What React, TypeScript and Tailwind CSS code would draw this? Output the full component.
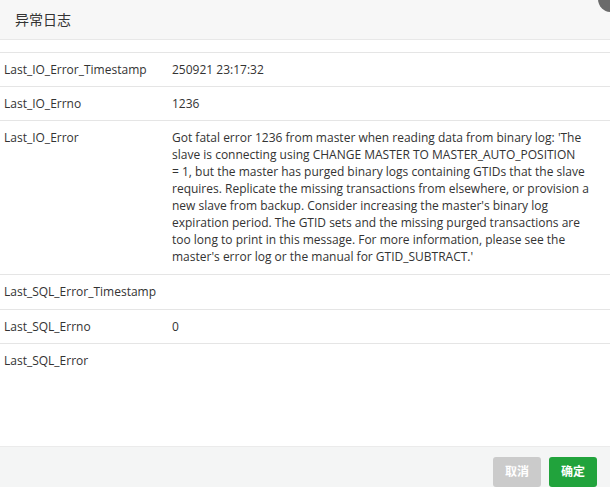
import React from "react";

const rows: { k: string; v: string[]; pb?: string }[] = [
  { k: "Last_IO_Error_Timestamp", v: ["250921 23:17:32"] },
  { k: "Last_IO_Errno", v: ["1236"] },
  {
    k: "Last_IO_Error",
    v: [
      "Got fatal error 1236 from master when reading data from binary log: 'The",
      "slave is connecting using CHANGE MASTER TO MASTER_AUTO_POSITION",
      "= 1, but the master has purged binary logs containing GTIDs that the slave",
      "requires. Replicate the missing transactions from elsewhere, or provision a",
      "new slave from backup. Consider increasing the master's binary log",
      "expiration period. The GTID sets and the missing purged transactions are",
      "too long to print in this message. For more information, please see the",
      "master's error log or the manual for GTID_SUBTRACT.'",
    ],
    pb: "pb-[9px]",
  },
  { k: "Last_SQL_Error_Timestamp", v: [], pb: "pb-[9px]" },
  { k: "Last_SQL_Errno", v: ["0"] },
  { k: "Last_SQL_Error", v: [] },
];

export default function App() {
  return (
    <div
      className="relative w-[610px] h-[487px] overflow-hidden bg-white flex flex-col text-[#333]"
      style={{ fontFamily: '"Open Sans", "Noto Sans CJK SC", sans-serif' }}
    >
      <div className="h-[40px] shrink-0 bg-[#f7f7f7] border-b border-[#e8e8e8] flex items-center pl-[15px] text-[14px]">
        异常日志
      </div>
      <div className="absolute right-[-14px] top-[-14px] w-[26px] h-[26px] rounded-full bg-[#6b6b6b]" />
      <div className="flex-1 pt-[12px]">
        <div className="border-t border-[#e5e5e5]">
          {rows.map((r, i) => (
            <div
              key={r.k}
              className={`flex pt-[8px] ${r.pb ?? "pb-[8px]"} text-[12px] leading-[17px] ${i < rows.length - 1 ? "border-b border-[#e5e5e5]" : ""}`}
            >
              <div className="w-[172px] shrink-0 pl-[4px]">{r.k}</div>
              <div className="flex-1 min-h-[17px] whitespace-nowrap">
                {r.v.map((line) => (
                  <div key={line}>{line}</div>
                ))}
              </div>
            </div>
          ))}
        </div>
      </div>
      <div className="h-[41px] shrink-0 bg-[#f4f5f5] border-t border-[#ebebeb] flex items-start justify-end gap-[8px] pr-[13px] pt-[10px]">
        <button className="w-[48px] h-[30px] rounded-[3px] bg-[#cbcbcb] text-white text-[12px] font-bold">取消</button>
        <button className="w-[48px] h-[30px] rounded-[3px] bg-[#21a33c] text-white text-[12px] font-bold">确定</button>
      </div>
    </div>
  );
}
